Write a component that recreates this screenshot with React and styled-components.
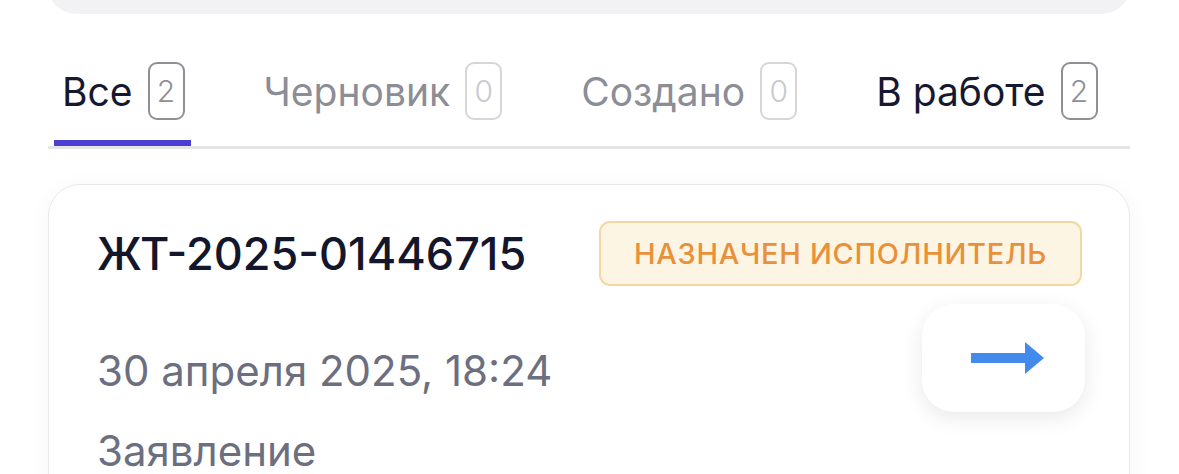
import React from "react"
import styled, { createGlobalStyle } from "styled-components"

const GlobalStyle = createGlobalStyle`
    html, body {
        margin: 0;
        background: #ffffff;
        font-family: Inter, "Noto Sans", sans-serif;
        -webkit-font-smoothing: antialiased;
    }
`

const Page = styled.div`
    padding: 0 49px 0 48px;
    overflow: hidden;
    height: 474px;
    box-sizing: border-box;
`

const SearchBox = styled.div`
    height: 74px;
    margin-top: -60px;
    background: #f2f2f4;
    border-radius: 28px;
`

const TabList = styled.div`
    display: flex;
    gap: 65px;
    margin-top: 48px;
    padding-left: 6px;
    border-bottom: 3px solid #e4e4e7;
`

const Tab = styled.div`
    display: flex;
    align-items: center;
    gap: 15px;
    padding: 0 6px 20px 8px;
    border-bottom: 6px solid ${p => (p.$active ? "#4a3fd0" : "transparent")};
    font-size: 39px;
    color: ${p => (p.$muted ? "#8d8d96" : "#161830")};
`

const Count = styled.span`
    display: flex;
    align-items: center;
    justify-content: center;
    width: 37px;
    height: 58px;
    box-sizing: border-box;
    border: 2px solid ${p => (p.$muted ? "#d6d6da" : "#8f8f96")};
    border-radius: 9px;
    font-size: 30px;
    font-weight: 300;
    color: ${p => (p.$muted ? "#c9c9ce" : "#8f8f96")};
`

const Card = styled.div`
    margin-top: 35px;
    border: 1px solid #e9e9ec;
    border-radius: 32px;
    background: #ffffff;
    box-shadow: 0 4px 26px rgba(0, 0, 0, 0.04);
    padding: 36px 47px 40px 48px;
`

const CardHead = styled.div`
    display: flex;
    align-items: center;
    justify-content: space-between;
`

const Number = styled.div`
    font-size: 45px;
    font-weight: 500;
    color: #14172c;
`

const Status = styled.div`
    height: 65px;
    box-sizing: border-box;
    display: flex;
    align-items: center;
    padding: 0 33px;
    background: #fdf5e3;
    border: 2px solid #f2d8a2;
    border-radius: 11px;
    font-size: 29px;
    font-weight: 500;
    letter-spacing: 0.7px;
    color: #e8913a;
`

const CardBody = styled.div`
    display: flex;
    justify-content: space-between;
    align-items: flex-start;
    margin-top: 18px;
`

const Meta = styled.div`
    display: flex;
    flex-direction: column;
    gap: 38px;
    padding-top: 46px;
`

const MetaLine = styled.div`
    font-size: 42px;
    line-height: 42px;
    color: #6c6f80;
`

const GoButton = styled.button`
    width: 163px;
    height: 108px;
    margin-right: -3px;
    display: flex;
    align-items: center;
    justify-content: center;
    padding: 0 0 0 8px;
    border: none;
    border-radius: 32px;
    background: #ffffff;
    box-shadow: 0 6px 22px rgba(0, 0, 0, 0.09);
`

const Arrow = () => (
    <svg width="73" height="32" viewBox="0 0 73 32">
        <rect x="0" y="11" width="56" height="10" fill="#428bec" />
        <polygon points="54,0 73,16 54,32" fill="#428bec" />
    </svg>
)

const tabs = [
    { label: "Все", count: 2, active: true },
    { label: "Черновик", count: 0 },
    { label: "Создано", count: 0 },
    { label: "В работе", count: 2 },
]

const App = () => (
    <Page>
        <GlobalStyle />
        <SearchBox />
        <TabList>
            {tabs.map(t => (
                <Tab key={t.label} $active={t.active} $muted={t.count === 0}>
                    {t.label}
                    <Count $muted={t.count === 0}>{t.count}</Count>
                </Tab>
            ))}
        </TabList>
        <Card>
            <CardHead>
                <Number>ЖТ-2025-01446715</Number>
                <Status>НАЗНАЧЕН ИСПОЛНИТЕЛЬ</Status>
            </CardHead>
            <CardBody>
                <Meta>
                    <MetaLine>30 апреля 2025, 18:24</MetaLine>
                    <MetaLine>Заявление</MetaLine>
                </Meta>
                <GoButton>
                    <Arrow />
                </GoButton>
            </CardBody>
        </Card>
    </Page>
)

export default App
